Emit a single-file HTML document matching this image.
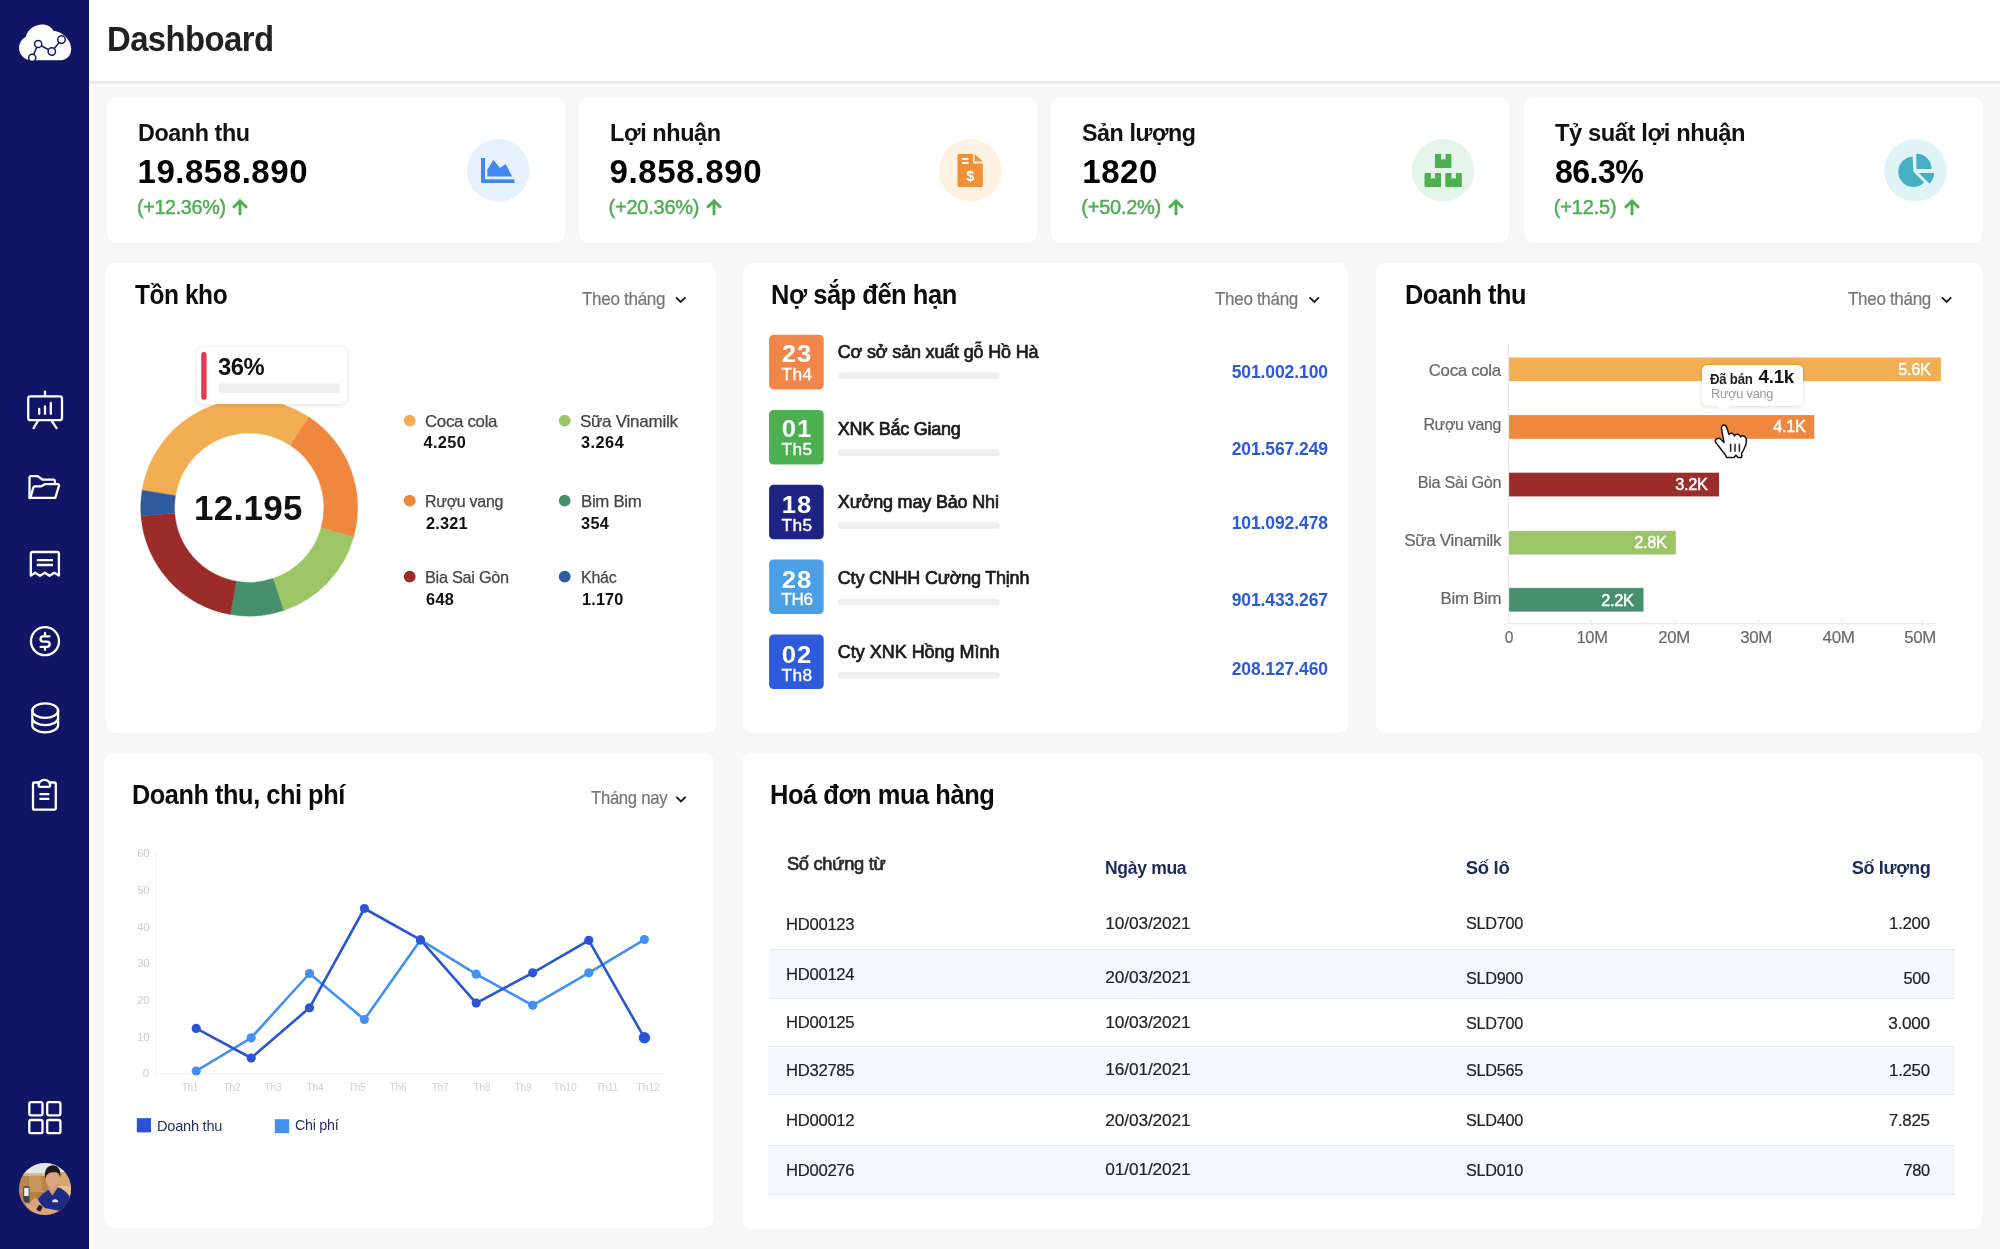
<!DOCTYPE html>
<html lang="vi">
<head>
<meta charset="utf-8">
<title>Dashboard</title>
<style>
html,body{margin:0;padding:0;}
body{width:2000px;height:1249px;overflow:hidden;background:#f7f7f7;font-family:"Liberation Sans", "DejaVu Sans", sans-serif;position:relative;}
.t{position:absolute;white-space:nowrap;line-height:1em;}
.b{position:absolute;}
svg{position:absolute;overflow:visible;}
#app{position:absolute;left:0;top:0;width:2000px;height:1249px;will-change:transform;}
</style>
</head>
<body>
<div id="app">
<div class="b" style="left:0px;top:0px;width:2000px;height:81px;background:#ffffff;box-shadow:0 1px 0 #e9e9e9, 0 2px 0 #e4e4e4, 0 3px 0 #efefef;"></div>
<svg style="left:0;top:0" width="2000" height="1249" viewBox="0 0 2000 1249"><rect x="0" y="0" width="89" height="1249" fill="#111566"/><rect x="89" y="84" width="4.5" height="1165" fill="#fbfbfb"/></svg>
<div class="t" id="t1" style="font-size:35px;color:#212121;top:21.30px;font-weight:700;letter-spacing:-0.630px;left:107px;transform:scaleX(0.9394);transform-origin:0 50%;">Dashboard</div>
<div class="b" style="left:106.5px;top:96.6px;width:458.2px;height:146.4px;background:#fff;border-radius:9px;box-shadow:0 0 2px rgba(0,0,0,0.025);"></div>
<div class="b" style="left:578.8px;top:96.6px;width:458.2px;height:146.4px;background:#fff;border-radius:9px;box-shadow:0 0 2px rgba(0,0,0,0.025);"></div>
<div class="b" style="left:1051.3px;top:96.6px;width:458.2px;height:146.4px;background:#fff;border-radius:9px;box-shadow:0 0 2px rgba(0,0,0,0.025);"></div>
<div class="b" style="left:1523.7px;top:96.6px;width:458.2px;height:146.4px;background:#fff;border-radius:9px;box-shadow:0 0 2px rgba(0,0,0,0.025);"></div>
<div class="b" style="left:106px;top:262.7px;width:609.8px;height:470.1px;background:#fff;border-radius:9px;box-shadow:0 0 2px rgba(0,0,0,0.025);"></div>
<div class="b" style="left:742.8px;top:262.7px;width:605.1px;height:470.1px;background:#fff;border-radius:9px;box-shadow:0 0 2px rgba(0,0,0,0.025);"></div>
<div class="b" style="left:1375.7px;top:262.7px;width:606.1px;height:470.1px;background:#fff;border-radius:9px;box-shadow:0 0 2px rgba(0,0,0,0.025);"></div>
<div class="b" style="left:104.4px;top:753.3px;width:609.8px;height:475px;background:#fff;border-radius:9px;box-shadow:0 0 2px rgba(0,0,0,0.025);"></div>
<div class="b" style="left:741.8px;top:753.3px;width:1240px;height:475.7px;background:#fff;border-radius:9px;box-shadow:0 0 2px rgba(0,0,0,0.025);"></div>
<div class="t" id="t2" style="font-size:24.5px;color:#111;top:120.55px;font-weight:700;letter-spacing:-0.441px;left:137.5px;transform:scaleX(0.9524);transform-origin:0 50%;">Doanh thu</div>
<div class="t" id="t3" style="font-size:33px;color:#000;top:155.30px;font-weight:700;letter-spacing:0.536px;left:137.5px;">19.858.890</div>
<div class="t" id="t4" style="font-size:20px;color:#4caf50;top:197.30px;-webkit-text-stroke:0.45px #4caf50;letter-spacing:-0.360px;left:136.5px;transform:scaleX(0.9893);transform-origin:0 50%;">(+12.36%)</div>
<svg style="left:231.4px;top:198.3px" width="18" height="18" viewBox="0 0 18 18"><path d="M9 17.2V3M2.1 9.7L9 2.8L15.9 9.7" fill="none" stroke="#4caf50" stroke-width="2.9"/></svg>
<svg style="left:0;top:0" width="2000" height="1249" viewBox="0 0 2000 1249"><rect x="467" y="139.1" width="62.6" height="62.6" rx="31.3" fill="#e5f1fd"/></svg>
<div class="t" id="t5" style="font-size:24.5px;color:#111;top:120.55px;font-weight:700;letter-spacing:-0.441px;left:609.5px;transform:scaleX(0.9571);transform-origin:0 50%;">Lợi nhuận</div>
<div class="t" id="t6" style="font-size:33px;color:#000;top:155.30px;font-weight:700;letter-spacing:0.648px;left:609.5px;">9.858.890</div>
<div class="t" id="t7" style="font-size:20px;color:#4caf50;top:197.30px;-webkit-text-stroke:0.45px #4caf50;letter-spacing:-0.230px;left:608.5px;">(+20.36%)</div>
<svg style="left:705.4px;top:198.3px" width="18" height="18" viewBox="0 0 18 18"><path d="M9 17.2V3M2.1 9.7L9 2.8L15.9 9.7" fill="none" stroke="#4caf50" stroke-width="2.9"/></svg>
<svg style="left:0;top:0" width="2000" height="1249" viewBox="0 0 2000 1249"><rect x="939" y="139.1" width="62.6" height="62.6" rx="31.3" fill="#fef2e3"/></svg>
<div class="t" id="t8" style="font-size:24.5px;color:#111;top:120.55px;font-weight:700;letter-spacing:-0.441px;left:1082.3px;transform:scaleX(0.9491);transform-origin:0 50%;">Sản lượng</div>
<div class="t" id="t9" style="font-size:33px;color:#000;top:155.30px;font-weight:700;letter-spacing:0.526px;left:1082.3px;">1820</div>
<div class="t" id="t10" style="font-size:20px;color:#4caf50;top:197.30px;-webkit-text-stroke:0.45px #4caf50;letter-spacing:-0.246px;left:1081.3px;">(+50.2%)</div>
<svg style="left:1167.2px;top:198.3px" width="18" height="18" viewBox="0 0 18 18"><path d="M9 17.2V3M2.1 9.7L9 2.8L15.9 9.7" fill="none" stroke="#4caf50" stroke-width="2.9"/></svg>
<svg style="left:0;top:0" width="2000" height="1249" viewBox="0 0 2000 1249"><rect x="1411.8" y="139.1" width="62.6" height="62.6" rx="31.3" fill="#e6f5ea"/></svg>
<div class="t" id="t11" style="font-size:24.5px;color:#111;top:120.55px;font-weight:700;letter-spacing:-0.441px;left:1554.7px;transform:scaleX(0.9682);transform-origin:0 50%;">Tỷ suất lợi nhuận</div>
<div class="t" id="t12" style="font-size:33px;color:#000;top:155.30px;font-weight:700;letter-spacing:-0.594px;left:1554.7px;transform:scaleX(0.9748);transform-origin:0 50%;">86.3%</div>
<div class="t" id="t13" style="font-size:20px;color:#4caf50;top:197.30px;-webkit-text-stroke:0.45px #4caf50;letter-spacing:-0.156px;left:1553.7px;">(+12.5)</div>
<svg style="left:1622.6px;top:198.3px" width="18" height="18" viewBox="0 0 18 18"><path d="M9 17.2V3M2.1 9.7L9 2.8L15.9 9.7" fill="none" stroke="#4caf50" stroke-width="2.9"/></svg>
<svg style="left:0;top:0" width="2000" height="1249" viewBox="0 0 2000 1249"><rect x="1884.2" y="139.1" width="62.6" height="62.6" rx="31.3" fill="#e0f4f8"/></svg>
<svg style="left:0;top:0" width="2000" height="1249" viewBox="0 0 2000 1249"><path d="M481 158h4v21.2h29.4v3.8H481z" fill="#4189ee"/><path d="M487.3 169.7L493.4 160.1L500 168.1L505.7 164L512.1 176.4H487.3z" fill="#4189ee"/></svg>
<svg style="left:0;top:0" width="2000" height="1249" viewBox="0 0 2000 1249"><path d="M958.7 153.9H973v8a1.6 1.6 0 0 0 1.6 1.6h8.3V185.6a1.4 1.4 0 0 1 -1.4 1.4H958.9a1.4 1.4 0 0 1 -1.4 -1.4V155.3a1.4 1.4 0 0 1 1.4 -1.4z" fill="#f0913a"/><path d="M974.5 153.9L982.9 161.6H974.5z" fill="#f0913a"/><rect x="961.9" y="158" width="6.6" height="1.9" fill="#fff"/><rect x="961.9" y="162" width="6.6" height="1.9" fill="#fff"/></svg>
<div class="t" id="t14" style="font-size:14.5px;color:#fff;top:169.05px;font-weight:700;left:970.2px;transform:translateX(-50%) ;">$</div>
<svg style="left:0;top:0" width="2000" height="1249" viewBox="0 0 2000 1249"><path d="M1435.9 154H1441.17V159.8L1443.32 159L1445.46 159.8V154H1450.4a1 1 0 0 1 1 1V167a1 1 0 0 1 -1 1H1435.9a1 1 0 0 1 -1 -1V155a1 1 0 0 1 1 -1z" fill="#4cb050"/><path d="M1425.5 172.9H1430.77V178.7L1432.91 177.9L1435.06 178.7V172.9H1440a1 1 0 0 1 1 1V185.9a1 1 0 0 1 -1 1H1425.5a1 1 0 0 1 -1 -1V173.9a1 1 0 0 1 1 -1z" fill="#4cb050"/><path d="M1446.3 172.9H1451.57V178.7L1453.71 177.9L1455.86 178.7V172.9H1460.8a1 1 0 0 1 1 1V185.9a1 1 0 0 1 -1 1H1446.3a1 1 0 0 1 -1 -1V173.9a1 1 0 0 1 1 -1z" fill="#4cb050"/></svg>
<svg style="left:0;top:0" width="2000" height="1249" viewBox="0 0 2000 1249"><path d="M1913.40 171.70L1924.15 182.45A15.2 15.2 0 1 1 1912.60 156.52Z" fill="#47b0c5"/><path d="M1916.40 169.00L1916.40 153.80A15.2 15.2 0 0 1 1931.60 169.00Z" fill="#47b0c5"/><path d="M1918.80 172.90L1934.00 172.90A15.2 15.2 0 0 1 1929.55 183.65Z" fill="#47b0c5"/></svg>
<svg style="left:0;top:0" width="2000" height="1249" viewBox="0 0 2000 1249"><path d="M31 60.2H61C66.5 60.2 71.2 55.5 71.2 49C71.2 43 67.5 37.5 62.9 34.4C60 32.3 56.5 30.8 53.6 30.9C51.5 27 47.3 24.5 42.4 24.5C34.5 24.5 27.5 29.5 25.8 36.9C21.8 38.8 19.1 43 19.1 48C19.1 54.7 24.4 60.2 31 60.2Z" fill="#ffffff"/><g stroke="#111566" stroke-width="1.5" fill="none"><path d="M32.2 57.8L38.2 44L51.8 51.5L61.5 39.6"/></g><g stroke="#111566" stroke-width="1.5" fill="#ffffff"><circle cx="32.2" cy="57.8" r="3.6"/><circle cx="38.2" cy="44" r="3.6"/><circle cx="51.8" cy="51.5" r="3.7"/><circle cx="61.5" cy="39.6" r="3.8"/></g></svg>
<svg style="left:0;top:0" width="2000" height="1249" viewBox="0 0 2000 1249"><g fill="none" stroke="#fff" stroke-width="2.3" stroke-linecap="round" stroke-linejoin="round"><rect x="28.2" y="396.3" width="33.8" height="23.8" rx="2.2"/><path d="M45 391.6V396M37.8 421L33.6 428.1M51.8 421L56.6 428.1M39.2 409V413.8M45 406.4V413.8M50.8 402.8V413.8"/></g><g fill="none" stroke="#fff" stroke-width="2.3" stroke-linecap="round" stroke-linejoin="round" stroke-width="2.2"><path d="M29.5 498V477.4a1.3 1.3 0 0 1 1.3 -1.3H37.6L42.7 479.7H53.6a1.3 1.3 0 0 1 1.3 1.3V483.8"/><path d="M30.3 498.1L33.3 487.6a1.8 1.8 0 0 1 1.7 -1.3H41.2L45.3 484.1H58a1.1 1.1 0 0 1 1 1.5L55.3 497.9H29.8"/></g><g fill="none" stroke="#fff" stroke-width="2.3" stroke-linecap="round" stroke-linejoin="round" stroke-width="2.2"><path d="M30.8 575.6V553.4a1.4 1.4 0 0 1 1.4 -1.4H57.5a1.4 1.4 0 0 1 1.4 1.4V575.6L54.3 572.7L49.5 575.8L44.8 572.7L40 575.8L35.2 572.7z"/><path d="M36.8 560.2H53M36.8 565H53" stroke-linecap="butt"/></g><g fill="none" stroke="#fff" stroke-width="2.3" stroke-linecap="round" stroke-linejoin="round" stroke-width="2.1"><circle cx="45" cy="641.2" r="14"/><path d="M49.4 636.3H43.2a2.65 2.65 0 0 0 0 5.3h3.8a2.65 2.65 0 0 1 0 5.3H40.6M45 632.8V636M45 647.2V649.8"/></g><g fill="none" stroke="#fff" stroke-width="2.3" stroke-linecap="round" stroke-linejoin="round" stroke-width="2.1"><ellipse cx="45.2" cy="710.6" rx="12.9" ry="7.2"/><path d="M32.3 710.6V725.2a12.9 7.2 0 0 0 25.8 0V710.6M32.3 717.9a12.9 7.2 0 0 0 25.8 0"/></g><g fill="none" stroke="#fff" stroke-width="2.3" stroke-linecap="round" stroke-linejoin="round" stroke-width="2.2"><path d="M38.5 782.5H34.4a1.4 1.4 0 0 0 -1.4 1.4V808.3a1.4 1.4 0 0 0 1.4 1.4H54.4a1.4 1.4 0 0 0 1.4 -1.4V783.9a1.4 1.4 0 0 0 -1.4 -1.4H50.2"/><path d="M38.6 782.2V785.6a1.2 1.2 0 0 0 1.2 1.2H49a1.2 1.2 0 0 0 1.2 -1.2V785.4a5.8 5.6 0 0 0 -11.6 0"/><path d="M39.4 794.2H49.4M39.4 798.9H49.4" stroke-linecap="butt"/></g><g fill="none" stroke="#fff" stroke-width="2.3" stroke-linecap="round" stroke-linejoin="round" stroke-width="2.5"><rect x="29.3" y="1102.1" width="13.2" height="13.2" rx="1.8"/><rect x="47.2" y="1102.1" width="13.2" height="13.2" rx="1.8"/><rect x="29.3" y="1120" width="13.2" height="13.2" rx="1.8"/><rect x="47.2" y="1120" width="13.2" height="13.2" rx="1.8"/></g></svg>
<div class="b" style="left:19px;top:1163px;width:52px;height:52px;border-radius:50%;overflow:hidden;"><svg style="left:0;top:0" width="52" height="52" viewBox="19 1163 52 52"><g><rect x="19" y="1163" width="53" height="53" fill="#c2905a"/><rect x="19" y="1163" width="53" height="10.6" fill="#e4e6e8"/><rect x="19" y="1173.4" width="30" height="2.4" fill="#d7b98c"/><rect x="20" y="1176" width="9" height="14" fill="#bb864c"/><rect x="30" y="1176" width="11" height="16" fill="#c8965a"/><rect x="42" y="1176" width="8" height="15" fill="#b98349"/><rect x="58" y="1172" width="14" height="14" fill="#d3a870"/><rect x="58" y="1186" width="14" height="12" fill="#e0c08f"/><rect x="19" y="1192" width="24" height="12" fill="#b57f45"/><path d="M37.6 1216L38.4 1198.5Q42 1193.5 48.5 1189.6L52.5 1194.5L58 1187.2Q65 1189.5 70.5 1197.5L72 1216z" fill="#1c2c85"/><path d="M48.3 1189.4L52.4 1195.4L58 1187L56.2 1183.5H48.6z" fill="#d29b77"/><ellipse cx="52.2" cy="1179.4" rx="6.6" ry="8" fill="#dba680"/><path d="M45.2 1178.5Q43.6 1166 52.6 1165.2Q61.6 1166 60.2 1177.5Q59.3 1171.6 52.8 1172.2Q47 1172.2 45.2 1178.5z" fill="#1c1a1c"/><rect x="23.3" y="1186.3" width="6.1" height="16.5" rx="1.3" fill="#3b4348"/><rect x="24.2" y="1187.8" width="4.4" height="8.2" fill="#e9f3f4"/><path d="M22.5 1197.5L24 1203L30 1203.5Q33 1197.5 37 1198.5L41.5 1205L45 1208L60 1211L56 1216H36L27 1207z" fill="#d9a47e"/><rect x="37.4" y="1205.3" width="4.4" height="5.8" rx="1" fill="#1e1e22" transform="rotate(28 39.6 1208.2)"/><path d="M52.6 1200.4q2.6 -2.2 5.2 0l0.6 1.8h-6.4z" fill="#e9eef7"/></g></svg></div>
<div class="t" id="t15" style="font-size:27px;color:#0b0b0b;top:281.80px;font-weight:700;letter-spacing:-0.486px;left:135.3px;transform:scaleX(0.9072);transform-origin:0 50%;">Tồn kho</div>
<div class="t" id="t16" style="font-size:18.2px;color:#767676;top:290.20px;-webkit-text-stroke:0.2px #767676;letter-spacing:-0.328px;left:582px;transform:scaleX(0.9373);transform-origin:0 50%;">Theo tháng</div>
<svg style="left:0;top:0" width="2000" height="1249" viewBox="0 0 2000 1249"><path d="M676 297.3l4.7 4.7l4.7 -4.7" fill="none" stroke="#1a1a1a" stroke-width="1.9"/></svg>
<svg style="left:0;top:0" width="2000" height="1249" viewBox="0 0 2000 1249"><path d="M142.13 490.17A108.5 108.5 0 0 1 308.93 417.12L290.32 445.34A74.7 74.7 0 0 0 175.48 495.63Z" fill="#f2ae52" stroke="#f2ae52" stroke-width="0.4"/><path d="M308.93 417.12A108.5 108.5 0 0 1 353.65 537.06L321.11 527.91A74.7 74.7 0 0 0 290.32 445.34Z" fill="#f0873f" stroke="#f0873f" stroke-width="0.4"/><path d="M353.65 537.06A108.5 108.5 0 0 1 283.63 610.59L272.90 578.54A74.7 74.7 0 0 0 321.11 527.91Z" fill="#9cc665" stroke="#9cc665" stroke-width="0.4"/><path d="M283.63 610.59A108.5 108.5 0 0 1 230.36 614.55L236.23 581.27A74.7 74.7 0 0 0 272.90 578.54Z" fill="#46906d" stroke="#46906d" stroke-width="0.4"/><path d="M230.36 614.55A108.5 108.5 0 0 1 140.99 515.65L174.70 513.17A74.7 74.7 0 0 0 236.23 581.27Z" fill="#9b2c29" stroke="#9b2c29" stroke-width="0.4"/><path d="M140.99 515.65A108.5 108.5 0 0 1 142.13 490.17L175.48 495.63A74.7 74.7 0 0 0 174.70 513.17Z" fill="#2d5b9e" stroke="#2d5b9e" stroke-width="0.4"/></svg>
<div class="t" id="t17" style="font-size:35px;color:#111;top:490.30px;font-weight:700;letter-spacing:0.307px;left:194px;">12.195</div>
<div class="b" style="left:196.5px;top:346.8px;width:150.5px;height:57.7px;background:#fff;border-radius:7px;box-shadow:0 1px 5px rgba(0,0,0,0.13);"></div>
<svg style="left:0;top:0" width="2000" height="1249" viewBox="0 0 2000 1249"><rect x="201.2" y="352" width="5.4" height="47.7" rx="2.7" fill="#e8384f"/></svg>
<div class="t" id="t18" style="font-size:24px;color:#111;top:354.80px;font-weight:700;letter-spacing:-0.432px;left:218px;transform:scaleX(0.9898);transform-origin:0 50%;">36%</div>
<svg style="left:0;top:0" width="2000" height="1249" viewBox="0 0 2000 1249"><rect x="218.5" y="383.3" width="121.4" height="9.7" rx="3" fill="#efefef"/><rect x="403.8" y="414.7" width="11.8" height="11.8" rx="5.9" fill="#f2ae52"/></svg>
<div class="t" id="t19" style="font-size:17px;color:#444;top:413.30px;-webkit-text-stroke:0.25px #444;letter-spacing:-0.306px;left:424.9px;transform:scaleX(0.9910);transform-origin:0 50%;">Coca cola</div>
<div class="t" id="t20" style="font-size:16.3px;color:#111;top:434.15px;font-weight:700;letter-spacing:0.363px;left:423.5px;">4.250</div>
<svg style="left:0;top:0" width="2000" height="1249" viewBox="0 0 2000 1249"><rect x="403.8" y="494.8" width="11.8" height="11.8" rx="5.9" fill="#f0873f"/></svg>
<div class="t" id="t21" style="font-size:17px;color:#444;top:493.30px;-webkit-text-stroke:0.25px #444;letter-spacing:-0.306px;left:425.2px;transform:scaleX(0.9399);transform-origin:0 50%;">Rượu vang</div>
<div class="t" id="t22" style="font-size:16.3px;color:#111;top:515.15px;font-weight:700;letter-spacing:0.162px;left:426.1px;">2.321</div>
<svg style="left:0;top:0" width="2000" height="1249" viewBox="0 0 2000 1249"><rect x="403.8" y="570.7" width="11.8" height="11.8" rx="5.9" fill="#9b2c29"/></svg>
<div class="t" id="t23" style="font-size:17px;color:#444;top:569.30px;-webkit-text-stroke:0.25px #444;letter-spacing:-0.306px;left:425.2px;transform:scaleX(0.9604);transform-origin:0 50%;">Bia Sai Gòn</div>
<div class="t" id="t24" style="font-size:16.3px;color:#111;top:591.15px;font-weight:700;letter-spacing:0.264px;left:426.1px;">648</div>
<svg style="left:0;top:0" width="2000" height="1249" viewBox="0 0 2000 1249"><rect x="558.8" y="414.7" width="11.8" height="11.8" rx="5.9" fill="#9cc665"/></svg>
<div class="t" id="t25" style="font-size:17px;color:#444;top:413.30px;-webkit-text-stroke:0.25px #444;letter-spacing:-0.249px;left:579.9px;">Sữa Vinamilk</div>
<div class="t" id="t26" style="font-size:16.3px;color:#111;top:434.15px;font-weight:700;letter-spacing:0.463px;left:581.1px;">3.264</div>
<svg style="left:0;top:0" width="2000" height="1249" viewBox="0 0 2000 1249"><rect x="558.8" y="494.8" width="11.8" height="11.8" rx="5.9" fill="#46906d"/></svg>
<div class="t" id="t27" style="font-size:17px;color:#444;top:493.30px;-webkit-text-stroke:0.25px #444;letter-spacing:-0.306px;left:580.6px;transform:scaleX(0.9879);transform-origin:0 50%;">Bim Bim</div>
<div class="t" id="t28" style="font-size:16.3px;color:#111;top:515.15px;font-weight:700;letter-spacing:0.314px;left:581.1px;">354</div>
<svg style="left:0;top:0" width="2000" height="1249" viewBox="0 0 2000 1249"><rect x="558.8" y="570.7" width="11.8" height="11.8" rx="5.9" fill="#2d5b9e"/></svg>
<div class="t" id="t29" style="font-size:17px;color:#444;top:569.30px;-webkit-text-stroke:0.25px #444;letter-spacing:-0.306px;left:580.6px;transform:scaleX(0.9436);transform-origin:0 50%;">Khác</div>
<div class="t" id="t30" style="font-size:16.3px;color:#111;top:591.15px;font-weight:700;letter-spacing:0.162px;left:582px;">1.170</div>
<div class="t" id="t31" style="font-size:27px;color:#0b0b0b;top:281.80px;font-weight:700;letter-spacing:-0.486px;left:771px;transform:scaleX(0.9432);transform-origin:0 50%;">Nợ sắp đến hạn</div>
<div class="t" id="t32" style="font-size:18.2px;color:#767676;top:290.20px;-webkit-text-stroke:0.2px #767676;letter-spacing:-0.328px;left:1215.4px;transform:scaleX(0.9351);transform-origin:0 50%;">Theo tháng</div>
<svg style="left:0;top:0" width="2000" height="1249" viewBox="0 0 2000 1249"><path d="M1309.6 297.3l4.7 4.7l4.7 -4.7" fill="none" stroke="#1a1a1a" stroke-width="1.9"/></svg>
<svg style="left:0;top:0" width="2000" height="1249" viewBox="0 0 2000 1249"><rect x="769.1" y="334.8" width="54.6" height="54.6" rx="4.5" fill="#f0874a"/></svg>
<div class="t" id="t33" style="font-size:24.5px;color:#fff;top:341.55px;font-weight:700;letter-spacing:0.980px;left:796.79px;transform:translateX(-50%) scaleX(1.0479);">23</div>
<div class="t" id="t34" style="font-size:17.3px;color:#fff;top:365.65px;-webkit-text-stroke:0.35px #fff;letter-spacing:0.509px;left:797.055px;transform:translateX(-50%) ;">Th4</div>
<div class="t" id="t35" style="font-size:18px;color:#1a1a1a;top:343.30px;-webkit-text-stroke:0.7px #1a1a1a;letter-spacing:-0.182px;left:837.8px;">Cơ sở sản xuất gỗ Hồ Hà</div>
<svg style="left:0;top:0" width="2000" height="1249" viewBox="0 0 2000 1249"><rect x="837.8" y="372.2" width="162" height="6.8" rx="3.4" fill="#efefef"/></svg>
<div class="t" id="t36" style="font-size:17.5px;color:#2b59db;top:363.55px;font-weight:700;letter-spacing:-0.093px;right:672.093px;">501.002.100</div>
<svg style="left:0;top:0" width="2000" height="1249" viewBox="0 0 2000 1249"><rect x="769.1" y="410" width="54.6" height="54.6" rx="4.5" fill="#4caf50"/></svg>
<div class="t" id="t37" style="font-size:24.5px;color:#fff;top:416.55px;font-weight:700;letter-spacing:0.980px;left:796.79px;transform:translateX(-50%) scaleX(1.0479);">01</div>
<div class="t" id="t38" style="font-size:17.3px;color:#fff;top:440.65px;-webkit-text-stroke:0.35px #fff;letter-spacing:0.509px;left:797.055px;transform:translateX(-50%) ;">Th5</div>
<div class="t" id="t39" style="font-size:18px;color:#1a1a1a;top:420.30px;-webkit-text-stroke:0.7px #1a1a1a;letter-spacing:-0.264px;left:837.8px;">XNK Bắc Giang</div>
<svg style="left:0;top:0" width="2000" height="1249" viewBox="0 0 2000 1249"><rect x="837.8" y="449.3" width="162" height="6.8" rx="3.4" fill="#efefef"/></svg>
<div class="t" id="t40" style="font-size:17.5px;color:#2b59db;top:440.55px;font-weight:700;letter-spacing:-0.093px;right:672.093px;">201.567.249</div>
<svg style="left:0;top:0" width="2000" height="1249" viewBox="0 0 2000 1249"><rect x="769.1" y="484.7" width="54.6" height="54.6" rx="4.5" fill="#1f2383"/></svg>
<div class="t" id="t41" style="font-size:24.5px;color:#fff;top:492.55px;font-weight:700;letter-spacing:0.980px;left:796.79px;transform:translateX(-50%) scaleX(1.0479);">18</div>
<div class="t" id="t42" style="font-size:17.3px;color:#fff;top:516.65px;-webkit-text-stroke:0.35px #fff;letter-spacing:0.509px;left:797.055px;transform:translateX(-50%) ;">Th5</div>
<div class="t" id="t43" style="font-size:18px;color:#1a1a1a;top:493.30px;-webkit-text-stroke:0.7px #1a1a1a;letter-spacing:-0.177px;left:837.8px;">Xưởng may Bảo Nhi</div>
<svg style="left:0;top:0" width="2000" height="1249" viewBox="0 0 2000 1249"><rect x="837.8" y="522.2" width="162" height="6.8" rx="3.4" fill="#efefef"/></svg>
<div class="t" id="t44" style="font-size:17.5px;color:#2b59db;top:514.55px;font-weight:700;letter-spacing:-0.093px;right:672.093px;">101.092.478</div>
<svg style="left:0;top:0" width="2000" height="1249" viewBox="0 0 2000 1249"><rect x="769.1" y="559.5" width="54.6" height="54.6" rx="4.5" fill="#4a9fe6"/></svg>
<div class="t" id="t45" style="font-size:24.5px;color:#fff;top:567.55px;font-weight:700;letter-spacing:0.980px;left:796.79px;transform:translateX(-50%) scaleX(1.0479);">28</div>
<div class="t" id="t46" style="font-size:17.3px;color:#fff;top:590.65px;-webkit-text-stroke:0.35px #fff;letter-spacing:-0.311px;left:796.644px;transform:translateX(-50%) scaleX(0.9958);">TH6</div>
<div class="t" id="t47" style="font-size:18px;color:#1a1a1a;top:569.30px;-webkit-text-stroke:0.7px #1a1a1a;letter-spacing:-0.209px;left:837.8px;">Cty CNHH Cường Thịnh</div>
<svg style="left:0;top:0" width="2000" height="1249" viewBox="0 0 2000 1249"><rect x="837.8" y="598.8" width="162" height="6.8" rx="3.4" fill="#efefef"/></svg>
<div class="t" id="t48" style="font-size:17.5px;color:#2b59db;top:591.55px;font-weight:700;letter-spacing:-0.093px;right:672.093px;">901.433.267</div>
<svg style="left:0;top:0" width="2000" height="1249" viewBox="0 0 2000 1249"><rect x="769.1" y="634.4" width="54.6" height="54.6" rx="4.5" fill="#2e5bd9"/></svg>
<div class="t" id="t49" style="font-size:24.5px;color:#fff;top:642.55px;font-weight:700;letter-spacing:0.980px;left:796.79px;transform:translateX(-50%) scaleX(1.0479);">02</div>
<div class="t" id="t50" style="font-size:17.3px;color:#fff;top:666.65px;-webkit-text-stroke:0.35px #fff;letter-spacing:0.509px;left:797.055px;transform:translateX(-50%) ;">Th8</div>
<div class="t" id="t51" style="font-size:18px;color:#1a1a1a;top:643.30px;-webkit-text-stroke:0.7px #1a1a1a;letter-spacing:-0.023px;left:837.8px;">Cty XNK Hồng Mình</div>
<svg style="left:0;top:0" width="2000" height="1249" viewBox="0 0 2000 1249"><rect x="837.8" y="671.9" width="162" height="6.8" rx="3.4" fill="#efefef"/></svg>
<div class="t" id="t52" style="font-size:17.5px;color:#2b59db;top:660.55px;font-weight:700;letter-spacing:-0.093px;right:672.093px;">208.127.460</div>
<div class="t" id="t53" style="font-size:27px;color:#0b0b0b;top:281.80px;font-weight:700;letter-spacing:-0.486px;left:1405px;transform:scaleX(0.9375);transform-origin:0 50%;">Doanh thu</div>
<div class="t" id="t54" style="font-size:18.2px;color:#767676;top:290.20px;-webkit-text-stroke:0.2px #767676;letter-spacing:-0.328px;left:1848px;transform:scaleX(0.9351);transform-origin:0 50%;">Theo tháng</div>
<svg style="left:0;top:0" width="2000" height="1249" viewBox="0 0 2000 1249"><path d="M1941.9 297.3l4.7 4.7l4.7 -4.7" fill="none" stroke="#1a1a1a" stroke-width="1.9"/></svg>
<svg style="left:0;top:0" width="2000" height="1249" viewBox="0 0 2000 1249"><path d="M1508.4 344V623.6H1937" fill="none" stroke="#e9e9e9" stroke-width="1.1"/><path d="M1591.6 619.4V626" stroke="#e9e9e9" stroke-width="1.1"/><path d="M1675 619.4V626" stroke="#e9e9e9" stroke-width="1.1"/><path d="M1758.4 619.4V626" stroke="#e9e9e9" stroke-width="1.1"/><path d="M1841.8 619.4V626" stroke="#e9e9e9" stroke-width="1.1"/><path d="M1922.5 619.4V626" stroke="#e9e9e9" stroke-width="1.1"/></svg>
<svg style="left:0;top:0" width="2000" height="1249" viewBox="0 0 2000 1249"><rect x="1509.1" y="357.5" width="431.8" height="23.7" fill="#f2ae52"/></svg>
<div class="t" id="t55" style="font-size:17px;color:#666;top:362.30px;-webkit-text-stroke:0.2px #666;letter-spacing:-0.306px;right:498.703px;transform:scaleX(0.9896);transform-origin:100% 50%;">Coca cola</div>
<div class="t" id="t56" style="font-size:17px;color:#fff;top:361.30px;-webkit-text-stroke:0.5px #fff;letter-spacing:-0.306px;right:69.0946px;transform:scaleX(0.9628);transform-origin:100% 50%;">5.6K</div>
<svg style="left:0;top:0" width="2000" height="1249" viewBox="0 0 2000 1249"><rect x="1509.1" y="415.1" width="305.2" height="23.7" fill="#f0873f"/></svg>
<div class="t" id="t57" style="font-size:17px;color:#666;top:416.30px;-webkit-text-stroke:0.2px #666;letter-spacing:-0.306px;right:498.686px;transform:scaleX(0.9351);transform-origin:100% 50%;">Rượu vang</div>
<div class="t" id="t58" style="font-size:17px;color:#fff;top:418.30px;-webkit-text-stroke:0.5px #fff;letter-spacing:-0.306px;right:194.495px;transform:scaleX(0.9628);transform-origin:100% 50%;">4.1K</div>
<svg style="left:0;top:0" width="2000" height="1249" viewBox="0 0 2000 1249"><rect x="1509.1" y="472.7" width="209.9" height="23.7" fill="#9b2c29"/></svg>
<div class="t" id="t59" style="font-size:17px;color:#666;top:474.30px;-webkit-text-stroke:0.2px #666;letter-spacing:-0.306px;right:498.693px;transform:scaleX(0.9581);transform-origin:100% 50%;">Bia Sài Gòn</div>
<div class="t" id="t60" style="font-size:17px;color:#fff;top:476.30px;-webkit-text-stroke:0.5px #fff;letter-spacing:-0.306px;right:292.395px;transform:scaleX(0.9628);transform-origin:100% 50%;">3.2K</div>
<svg style="left:0;top:0" width="2000" height="1249" viewBox="0 0 2000 1249"><rect x="1509.1" y="530.8" width="166.7" height="23.7" fill="#9cc665"/></svg>
<div class="t" id="t61" style="font-size:17px;color:#666;top:532.30px;-webkit-text-stroke:0.2px #666;letter-spacing:-0.306px;right:498.706px;">Sữa Vinamilk</div>
<div class="t" id="t62" style="font-size:17px;color:#fff;top:534.30px;-webkit-text-stroke:0.5px #fff;letter-spacing:-0.306px;right:333.395px;transform:scaleX(0.9628);transform-origin:100% 50%;">2.8K</div>
<svg style="left:0;top:0" width="2000" height="1249" viewBox="0 0 2000 1249"><rect x="1509.1" y="587.9" width="134.4" height="23.7" fill="#46906d"/></svg>
<div class="t" id="t63" style="font-size:17px;color:#666;top:590.30px;-webkit-text-stroke:0.2px #666;letter-spacing:-0.306px;right:498.703px;transform:scaleX(0.9911);transform-origin:100% 50%;">Bim Bim</div>
<div class="t" id="t64" style="font-size:17px;color:#fff;top:592.30px;-webkit-text-stroke:0.5px #fff;letter-spacing:-0.306px;right:365.795px;transform:scaleX(0.9628);transform-origin:100% 50%;">2.2K</div>
<div class="t" id="t65" style="font-size:17px;color:#6a6a6a;top:629.30px;-webkit-text-stroke:0.2px #6a6a6a;letter-spacing:-0.306px;left:1509.05px;transform:translateX(-50%) scaleX(0.9168);">0</div>
<div class="t" id="t66" style="font-size:17px;color:#6a6a6a;top:629.30px;-webkit-text-stroke:0.2px #6a6a6a;letter-spacing:-0.306px;left:1591.65px;transform:translateX(-50%) scaleX(0.9702);">10M</div>
<div class="t" id="t67" style="font-size:17px;color:#6a6a6a;top:629.30px;-webkit-text-stroke:0.2px #6a6a6a;letter-spacing:-0.306px;left:1673.85px;transform:translateX(-50%) scaleX(0.9856);">20M</div>
<div class="t" id="t68" style="font-size:17px;color:#6a6a6a;top:629.30px;-webkit-text-stroke:0.2px #6a6a6a;letter-spacing:-0.306px;left:1756.25px;transform:translateX(-50%) scaleX(0.9856);">30M</div>
<div class="t" id="t69" style="font-size:17px;color:#6a6a6a;top:629.30px;-webkit-text-stroke:0.2px #6a6a6a;letter-spacing:-0.306px;left:1838.65px;transform:translateX(-50%) ;">40M</div>
<div class="t" id="t70" style="font-size:17px;color:#6a6a6a;top:629.30px;-webkit-text-stroke:0.2px #6a6a6a;letter-spacing:-0.306px;left:1920.45px;transform:translateX(-50%) scaleX(0.9856);">50M</div>
<div class="b" style="left:1702.3px;top:365.3px;width:100.4px;height:41px;background:#fff;border-radius:5.5px;box-shadow:0 0.5px 4px rgba(0,0,0,0.14);"></div>
<svg style="left:0;top:0" width="2000" height="1249" viewBox="0 0 2000 1249"><path d="M1718.3 406L1723.8 412.4L1729.3 406z" fill="#fff"/></svg>
<div class="t" id="t71" style="font-size:14.3px;color:#222;top:372.15px;font-weight:700;letter-spacing:-0.257px;left:1710.2px;transform:scaleX(0.9227);transform-origin:0 50%;">Đã bán</div>
<div class="t" id="t72" style="font-size:18.7px;color:#111;top:368.45px;font-weight:700;letter-spacing:-0.258px;left:1758.6px;">4.1k</div>
<div class="t" id="t73" style="font-size:13.6px;color:#9a9a9a;top:387.00px;letter-spacing:-0.245px;left:1710.7px;transform:scaleX(0.9356);transform-origin:0 50%;">Rượu vang</div>
<svg style="left:0;top:0" width="2000" height="1249" viewBox="0 0 2000 1249"><path d="M1724 425.1C1725.6 425.1 1726.6 426.6 1727.1 428.4L1729 434.4C1729.6 433.2 1731.6 432.8 1732.6 433.6C1733.6 434.2 1734.2 435 1734.5 436C1735 434.4 1737.4 433.8 1738.6 434.6C1739.8 435.3 1740.5 436 1740.8 436.9C1741.6 435.6 1743.4 435.5 1744.6 436.4C1746 437.4 1746.5 438.8 1746.5 440.6C1746.6 443.8 1745.6 446.2 1744 449L1741.7 453.4V457.4H1737.7L1736 455.1L1734 457.4H1726.5L1725.6 455C1723.4 452.4 1719.6 447.4 1715.9 442.6C1715 441.4 1715.4 439.8 1716.6 438.9C1717.8 438 1719.4 438 1720.6 439L1724 442.4L1721.5 428.6C1721.2 426.8 1722.4 425.1 1724 425.1Z" fill="#fff" stroke="#161616" stroke-width="1.5" stroke-linejoin="round"/><path d="M1730.6 444.3V451.2M1735 444.3V451.2M1739.4 444.3V451.2" stroke="#222" stroke-width="1.5" stroke-linecap="round"/></svg>
<div class="t" id="t74" style="font-size:27px;color:#0b0b0b;top:781.80px;font-weight:700;letter-spacing:-0.486px;left:132.4px;transform:scaleX(0.9383);transform-origin:0 50%;">Doanh thu, chi phí</div>
<div class="t" id="t75" style="font-size:18.2px;color:#767676;top:789.20px;-webkit-text-stroke:0.2px #767676;letter-spacing:-0.328px;left:591px;transform:scaleX(0.9180);transform-origin:0 50%;">Tháng nay</div>
<svg style="left:0;top:0" width="2000" height="1249" viewBox="0 0 2000 1249"><path d="M676.3 796.8l4.7 4.7l4.7 -4.7" fill="none" stroke="#1a1a1a" stroke-width="1.9"/></svg>
<svg style="left:0;top:0" width="2000" height="1249" viewBox="0 0 2000 1249"><path d="M155.9 853.5V1073.7H664.2" fill="none" stroke="#f1f1f1" stroke-width="1.1"/></svg>
<div class="t" id="t76" style="font-size:11.4px;color:#cdcdcd;top:847.60px;letter-spacing:-0.205px;right:1851px;transform:scaleX(0.9866);transform-origin:100% 50%;">60</div>
<div class="t" id="t77" style="font-size:11.4px;color:#cdcdcd;top:884.60px;letter-spacing:-0.205px;right:1851px;transform:scaleX(0.9866);transform-origin:100% 50%;">50</div>
<div class="t" id="t78" style="font-size:11.4px;color:#cdcdcd;top:921.60px;letter-spacing:-0.205px;right:1851px;transform:scaleX(0.9866);transform-origin:100% 50%;">40</div>
<div class="t" id="t79" style="font-size:11.4px;color:#cdcdcd;top:957.60px;letter-spacing:-0.205px;right:1851px;transform:scaleX(0.9866);transform-origin:100% 50%;">30</div>
<div class="t" id="t80" style="font-size:11.4px;color:#cdcdcd;top:994.60px;letter-spacing:-0.205px;right:1851px;transform:scaleX(0.9866);transform-origin:100% 50%;">20</div>
<div class="t" id="t81" style="font-size:11.4px;color:#cdcdcd;top:1031.60px;letter-spacing:-0.205px;right:1851px;transform:scaleX(0.9866);transform-origin:100% 50%;">10</div>
<div class="t" id="t82" style="font-size:11.4px;color:#cdcdcd;top:1067.60px;letter-spacing:-0.144px;right:1850.94px;">0</div>
<div class="t" id="t83" style="font-size:10.9px;color:#d0d0d0;top:1081.85px;letter-spacing:-0.196px;left:190.302px;transform:translateX(-50%) scaleX(0.8810);">Th1</div>
<div class="t" id="t84" style="font-size:10.9px;color:#d0d0d0;top:1081.85px;letter-spacing:-0.196px;left:231.702px;transform:translateX(-50%) scaleX(0.9353);">Th2</div>
<div class="t" id="t85" style="font-size:10.9px;color:#d0d0d0;top:1081.85px;letter-spacing:-0.196px;left:273.102px;transform:translateX(-50%) scaleX(0.9353);">Th3</div>
<div class="t" id="t86" style="font-size:10.9px;color:#d0d0d0;top:1081.85px;letter-spacing:-0.196px;left:315.002px;transform:translateX(-50%) scaleX(0.9353);">Th4</div>
<div class="t" id="t87" style="font-size:10.9px;color:#d0d0d0;top:1081.85px;letter-spacing:-0.196px;left:356.702px;transform:translateX(-50%) scaleX(0.9462);">Th5</div>
<div class="t" id="t88" style="font-size:10.9px;color:#d0d0d0;top:1081.85px;letter-spacing:-0.196px;left:398.302px;transform:translateX(-50%) scaleX(0.9408);">Th6</div>
<div class="t" id="t89" style="font-size:10.9px;color:#d0d0d0;top:1081.85px;letter-spacing:-0.196px;left:439.702px;transform:translateX(-50%) scaleX(0.9190);">Th7</div>
<div class="t" id="t90" style="font-size:10.9px;color:#d0d0d0;top:1081.85px;letter-spacing:-0.196px;left:481.502px;transform:translateX(-50%) scaleX(0.9462);">Th8</div>
<div class="t" id="t91" style="font-size:10.9px;color:#d0d0d0;top:1081.85px;letter-spacing:-0.196px;left:523.202px;transform:translateX(-50%) scaleX(0.9353);">Th9</div>
<div class="t" id="t92" style="font-size:10.9px;color:#d0d0d0;top:1081.85px;letter-spacing:-0.196px;left:564.702px;transform:translateX(-50%) scaleX(0.9612);">Th10</div>
<div class="t" id="t93" style="font-size:10.9px;color:#d0d0d0;top:1081.85px;letter-spacing:-0.196px;left:606.602px;transform:translateX(-50%) scaleX(0.9562);">Th11</div>
<div class="t" id="t94" style="font-size:10.9px;color:#d0d0d0;top:1081.85px;letter-spacing:-0.196px;left:648.202px;transform:translateX(-50%) scaleX(0.9695);">Th12</div>
<svg style="left:0;top:0" width="2000" height="1249" viewBox="0 0 2000 1249"><path d="M196.2 1071L251.2 1037.8L309.5 973.5L364.4 1019.5L420.5 939.9L476.2 974.2L532.7 1005.3L588.8 972.8L644.4 939.6" fill="none" stroke="#4290f1" stroke-width="2.6" stroke-linejoin="round"/><circle cx="196.2" cy="1071" r="4.6" fill="#4290f1"/><circle cx="251.2" cy="1037.8" r="4.6" fill="#4290f1"/><circle cx="309.5" cy="973.5" r="4.6" fill="#4290f1"/><circle cx="364.4" cy="1019.5" r="4.6" fill="#4290f1"/><circle cx="420.5" cy="939.9" r="4.6" fill="#4290f1"/><circle cx="476.2" cy="974.2" r="4.6" fill="#4290f1"/><circle cx="532.7" cy="1005.3" r="4.6" fill="#4290f1"/><circle cx="588.8" cy="972.8" r="4.6" fill="#4290f1"/><circle cx="644.4" cy="939.6" r="4.6" fill="#4290f1"/><path d="M196.2 1028.4L251.2 1058L309.5 1007.8L364.4 908.5L420.5 939.9L476.2 1003.1L532.7 972.8L588.8 940.3L644.4 1037.8" fill="none" stroke="#2a56d4" stroke-width="2.6" stroke-linejoin="round"/><circle cx="196.2" cy="1028.4" r="4.6" fill="#2a56d4"/><circle cx="251.2" cy="1058" r="4.6" fill="#2a56d4"/><circle cx="309.5" cy="1007.8" r="4.6" fill="#2a56d4"/><circle cx="364.4" cy="908.5" r="4.6" fill="#2a56d4"/><circle cx="420.5" cy="939.9" r="4.6" fill="#2a56d4"/><circle cx="476.2" cy="1003.1" r="4.6" fill="#2a56d4"/><circle cx="532.7" cy="972.8" r="4.6" fill="#2a56d4"/><circle cx="588.8" cy="940.3" r="4.6" fill="#2a56d4"/><circle cx="644.4" cy="1037.8" r="5.7" fill="#2a56d4"/></svg>
<svg style="left:0;top:0" width="2000" height="1249" viewBox="0 0 2000 1249"><rect x="136.8" y="1118.2" width="14.2" height="14.2" fill="#2a52d4"/></svg>
<div class="t" id="t95" style="font-size:15px;color:#26305c;top:1118.30px;letter-spacing:-0.270px;left:156.6px;transform:scaleX(0.9750);transform-origin:0 50%;">Doanh thu</div>
<svg style="left:0;top:0" width="2000" height="1249" viewBox="0 0 2000 1249"><rect x="274.8" y="1119.2" width="14.4" height="14" fill="#4490f0"/></svg>
<div class="t" id="t96" style="font-size:15px;color:#26305c;top:1117.30px;letter-spacing:-0.270px;left:294.6px;transform:scaleX(0.9497);transform-origin:0 50%;">Chi phí</div>
<div class="t" id="t97" style="font-size:27px;color:#0b0b0b;top:781.80px;font-weight:700;letter-spacing:-0.486px;left:769.6px;transform:scaleX(0.9429);transform-origin:0 50%;">Hoá đơn mua hàng</div>
<div class="t" id="t98" style="font-size:18.3px;color:#2a2a2a;top:854.65px;-webkit-text-stroke:0.7px #2a2a2a;letter-spacing:-0.282px;left:786.9px;">Số chứng từ</div>
<div class="t" id="t99" style="font-size:18.5px;color:#1c2b5e;top:858.55px;font-weight:700;letter-spacing:-0.333px;left:1104.9px;transform:scaleX(0.9478);transform-origin:0 50%;">Ngày mua</div>
<div class="t" id="t100" style="font-size:18.5px;color:#1c2b5e;top:858.55px;font-weight:700;letter-spacing:-0.333px;left:1465.8px;">Số lô</div>
<div class="t" id="t101" style="font-size:18.5px;color:#1c2b5e;top:858.55px;font-weight:700;letter-spacing:-0.333px;right:70.0262px;transform:scaleX(0.9796);transform-origin:100% 50%;">Số lượng</div>
<div class="b" style="left:770.4px;top:949px;width:1184.5px;height:50.4px;background:#f4f9fd;box-shadow:inset 0 1px 0 #e2e9ef, inset 0 -1px 0 #e2e9ef;"></div>
<div class="b" style="left:767.6px;top:1046.4px;width:1187.3px;height:49px;background:#f4f9fd;box-shadow:inset 0 1px 0 #e2e9ef, inset 0 -1px 0 #e2e9ef;"></div>
<div class="b" style="left:767.6px;top:1145.2px;width:1187.3px;height:49.8px;background:#f4f9fd;box-shadow:inset 0 1px 0 #e2e9ef, inset 0 -1px 0 #e2e9ef;"></div>
<div class="t" id="t102" style="font-size:17.3px;color:#222;top:915.65px;-webkit-text-stroke:0.2px #222;letter-spacing:-0.311px;left:786.2px;transform:scaleX(0.9642);transform-origin:0 50%;">HD00123</div>
<div class="t" id="t103" style="font-size:17.3px;color:#222;top:914.65px;-webkit-text-stroke:0.2px #222;letter-spacing:-0.133px;left:1105.3px;">10/03/2021</div>
<div class="t" id="t104" style="font-size:17.3px;color:#222;top:914.65px;-webkit-text-stroke:0.2px #222;letter-spacing:-0.311px;left:1465.8px;transform:scaleX(0.9393);transform-origin:0 50%;">SLD700</div>
<div class="t" id="t105" style="font-size:17.3px;color:#222;top:914.65px;-webkit-text-stroke:0.2px #222;letter-spacing:-0.311px;right:70.6032px;transform:scaleX(0.9737);transform-origin:100% 50%;">1.200</div>
<div class="t" id="t106" style="font-size:17.3px;color:#222;top:965.65px;-webkit-text-stroke:0.2px #222;letter-spacing:-0.311px;left:786.2px;transform:scaleX(0.9642);transform-origin:0 50%;">HD00124</div>
<div class="t" id="t107" style="font-size:17.3px;color:#222;top:968.65px;-webkit-text-stroke:0.2px #222;letter-spacing:-0.133px;left:1105.3px;">20/03/2021</div>
<div class="t" id="t108" style="font-size:17.3px;color:#222;top:969.65px;-webkit-text-stroke:0.2px #222;letter-spacing:-0.311px;left:1465.8px;transform:scaleX(0.9393);transform-origin:0 50%;">SLD900</div>
<div class="t" id="t109" style="font-size:17.3px;color:#222;top:969.65px;-webkit-text-stroke:0.2px #222;letter-spacing:-0.311px;right:70.5946px;transform:scaleX(0.9461);transform-origin:100% 50%;">500</div>
<div class="t" id="t110" style="font-size:17.3px;color:#222;top:1013.65px;-webkit-text-stroke:0.2px #222;letter-spacing:-0.311px;left:786.2px;transform:scaleX(0.9642);transform-origin:0 50%;">HD00125</div>
<div class="t" id="t111" style="font-size:17.3px;color:#222;top:1013.65px;-webkit-text-stroke:0.2px #222;letter-spacing:-0.133px;left:1105.3px;">10/03/2021</div>
<div class="t" id="t112" style="font-size:17.3px;color:#222;top:1014.65px;-webkit-text-stroke:0.2px #222;letter-spacing:-0.311px;left:1465.8px;transform:scaleX(0.9393);transform-origin:0 50%;">SLD700</div>
<div class="t" id="t113" style="font-size:17.3px;color:#222;top:1014.65px;-webkit-text-stroke:0.2px #222;letter-spacing:-0.311px;right:70.6099px;transform:scaleX(0.9951);transform-origin:100% 50%;">3.000</div>
<div class="t" id="t114" style="font-size:17.3px;color:#222;top:1061.65px;-webkit-text-stroke:0.2px #222;letter-spacing:-0.311px;left:786.2px;transform:scaleX(0.9642);transform-origin:0 50%;">HD32785</div>
<div class="t" id="t115" style="font-size:17.3px;color:#222;top:1060.65px;-webkit-text-stroke:0.2px #222;letter-spacing:-0.133px;left:1105.3px;">16/01/2021</div>
<div class="t" id="t116" style="font-size:17.3px;color:#222;top:1061.65px;-webkit-text-stroke:0.2px #222;letter-spacing:-0.311px;left:1465.8px;transform:scaleX(0.9393);transform-origin:0 50%;">SLD565</div>
<div class="t" id="t117" style="font-size:17.3px;color:#222;top:1061.65px;-webkit-text-stroke:0.2px #222;letter-spacing:-0.311px;right:70.6032px;transform:scaleX(0.9737);transform-origin:100% 50%;">1.250</div>
<div class="t" id="t118" style="font-size:17.3px;color:#222;top:1111.65px;-webkit-text-stroke:0.2px #222;letter-spacing:-0.311px;left:786.2px;transform:scaleX(0.9642);transform-origin:0 50%;">HD00012</div>
<div class="t" id="t119" style="font-size:17.3px;color:#222;top:1111.65px;-webkit-text-stroke:0.2px #222;letter-spacing:-0.133px;left:1105.3px;">20/03/2021</div>
<div class="t" id="t120" style="font-size:17.3px;color:#222;top:1111.65px;-webkit-text-stroke:0.2px #222;letter-spacing:-0.311px;left:1465.8px;transform:scaleX(0.9393);transform-origin:0 50%;">SLD400</div>
<div class="t" id="t121" style="font-size:17.3px;color:#222;top:1111.65px;-webkit-text-stroke:0.2px #222;letter-spacing:-0.311px;right:70.6054px;transform:scaleX(0.9808);transform-origin:100% 50%;">7.825</div>
<div class="t" id="t122" style="font-size:17.3px;color:#222;top:1161.65px;-webkit-text-stroke:0.2px #222;letter-spacing:-0.311px;left:786.2px;transform:scaleX(0.9642);transform-origin:0 50%;">HD00276</div>
<div class="t" id="t123" style="font-size:17.3px;color:#222;top:1160.65px;-webkit-text-stroke:0.2px #222;letter-spacing:-0.133px;left:1105.3px;">01/01/2021</div>
<div class="t" id="t124" style="font-size:17.3px;color:#222;top:1161.65px;-webkit-text-stroke:0.2px #222;letter-spacing:-0.311px;left:1465.8px;transform:scaleX(0.9393);transform-origin:0 50%;">SLD010</div>
<div class="t" id="t125" style="font-size:17.3px;color:#222;top:1161.65px;-webkit-text-stroke:0.2px #222;letter-spacing:-0.311px;right:70.5946px;transform:scaleX(0.9461);transform-origin:100% 50%;">780</div>
</div>
</body>
</html>
